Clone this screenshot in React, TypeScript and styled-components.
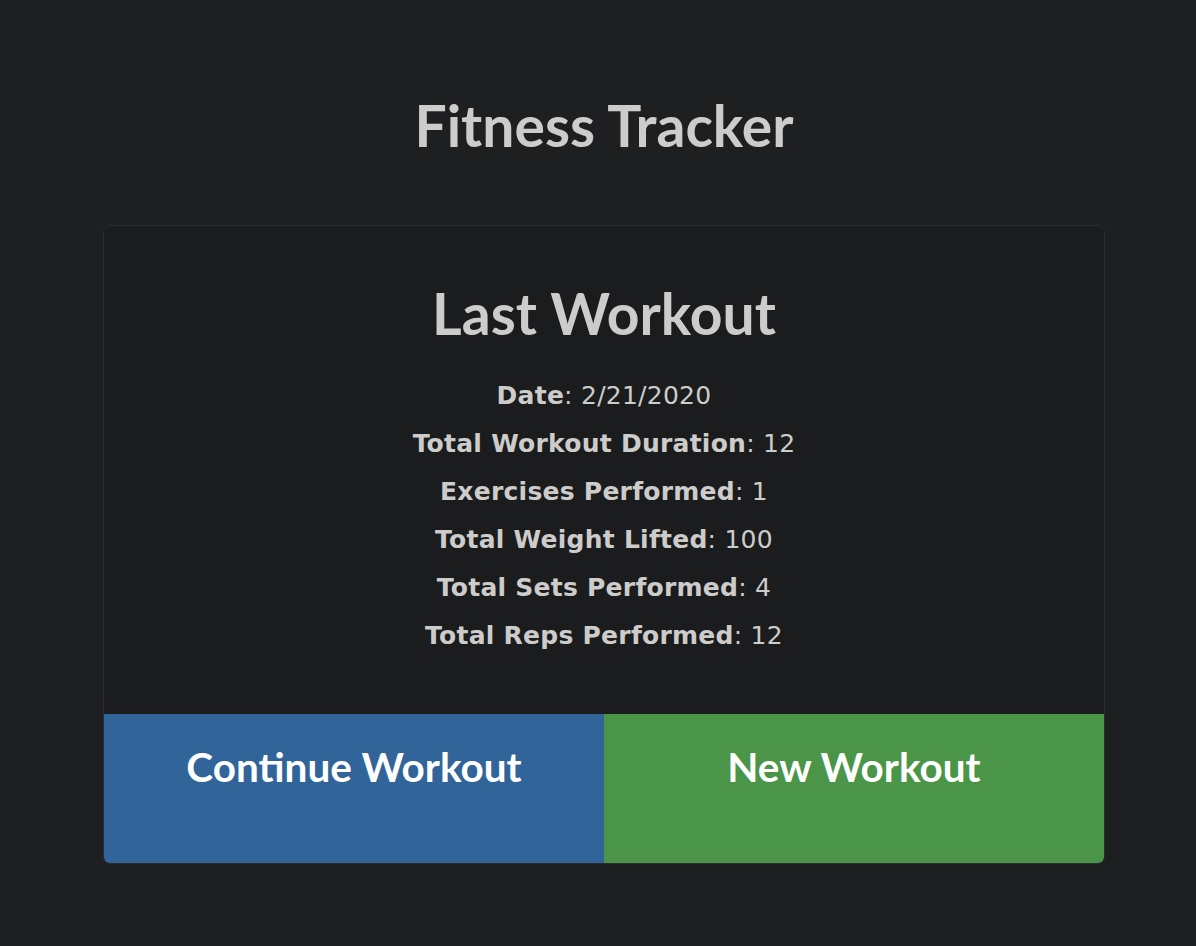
import React from 'react';
import styled, { createGlobalStyle } from 'styled-components';

const GlobalStyle = createGlobalStyle`
  html, body {
    margin: 0;
    padding: 0;
    background: #1e1f21;
  }
  body {
    font-family: Lato, "Open Sans", sans-serif;
    color: #cdccca;
  }
`;

const Page = styled.div`
  min-height: 946px;
  box-sizing: border-box;
  padding: 0 91px 0 103px;
`;

const Title = styled.h1`
  margin: 0;
  padding-top: 90px;
  height: 225px;
  box-sizing: border-box;
  text-align: center;
  font-family: Lato, sans-serif;
  font-weight: 700;
  font-size: 57px;
  line-height: 70px;
  color: #cdccca;
`;

const Card = styled.section`
  background: #1b1c1e;
  border: 1px solid #2b2c2f;
  border-radius: 7px;
  overflow: hidden;
  display: flex;
  flex-direction: column;
`;

const CardBody = styled.div`
  height: 488px;
  box-sizing: border-box;
  padding-top: 52px;
  text-align: center;
`;

const CardTitle = styled.h2`
  margin: 0 0 24px;
  font-family: Lato, sans-serif;
  font-weight: 700;
  font-size: 57px;
  line-height: 70px;
  color: #cdccca;
`;

const StatList = styled.div`
  display: flex;
  flex-direction: column;
  align-items: center;
`;

const Stat = styled.div`
  font-family: "DejaVu Sans", Verdana, sans-serif;
  font-size: 25px;
  letter-spacing: 0.25px;
  line-height: 48px;
  color: #cdccca;

  b {
    font-weight: 700;
  }
`;

const Actions = styled.div`
  display: grid;
  grid-template-columns: 1fr 1fr;
  height: 149px;
`;

const ActionButton = styled.button<{ $color: string }>`
  border: none;
  margin: 0;
  background: ${({ $color }) => $color};
  color: #ffffff;
  font-family: Lato, sans-serif;
  font-weight: 700;
  font-size: 40.5px;
  padding: 28px 0 0;
  display: flex;
  justify-content: center;
  align-items: flex-start;
  cursor: pointer;
`;

const stats = [
  { label: 'Date', value: '2/21/2020' },
  { label: 'Total Workout Duration', value: '12' },
  { label: 'Exercises Performed', value: '1' },
  { label: 'Total Weight Lifted', value: '100' },
  { label: 'Total Sets Performed', value: '4' },
  { label: 'Total Reps Performed', value: '12' },
];

export default function App() {
  return (
    <>
      <GlobalStyle />
      <Page>
        <Title>Fitness Tracker</Title>
        <Card>
          <CardBody>
            <CardTitle>Last Workout</CardTitle>
            <StatList>
              {stats.map((s) => (
                <Stat key={s.label}>
                  <b>{s.label}</b>: {s.value}
                </Stat>
              ))}
            </StatList>
          </CardBody>
          <Actions>
            <ActionButton $color="#31659a">Continue Workout</ActionButton>
            <ActionButton $color="#4a9547">New Workout</ActionButton>
          </Actions>
        </Card>
      </Page>
    </>
  );
}
